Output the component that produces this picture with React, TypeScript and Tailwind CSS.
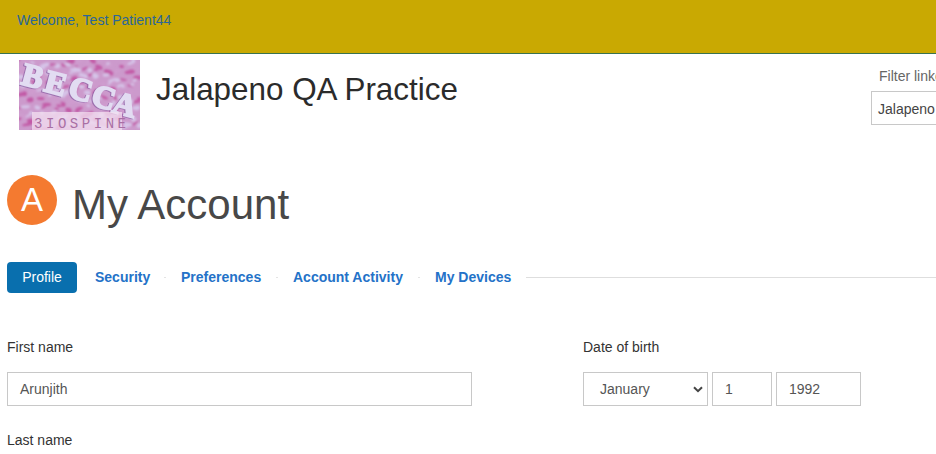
import type { ReactNode } from "react";

const logoSpots = Array.from({ length: 210 }, (_, i) => ({
  x: (i * 47.3 + (i % 7) * 5) % 121,
  y: (i * 29.7 + (i % 5) * 3) % 70,
  rx: 2 + ((i * 13) % 7) * 0.5,
  ry: 1 + ((i * 11) % 5) * 0.35,
  fill: ["#c25aa6", "#d9bce4", "#d6c4e8", "#ac5ca6", "#cf9ccf", "#c968ae"][(i * 5 + (i % 4)) % 6],
  angle: -35 + ((i * 23) % 60),
}));

const logoLetters = [
  { ch: "B", x: 14, y: 16 },
  { ch: "E", x: 37, y: 23 },
  { ch: "C", x: 62, y: 29 },
  { ch: "C", x: 85, y: 37 },
  { ch: "A", x: 106, y: 44 },
];

function Logo() {
  return (
    <svg width="121" height="70" viewBox="0 0 121 70" className="block shrink-0">
      <defs>
        <filter id="soft"><feGaussianBlur stdDeviation="0.8" /></filter>
        <filter id="edge"><feGaussianBlur stdDeviation="0.35" /></filter>
        <clipPath id="frame"><rect width="121" height="70" /></clipPath>
      </defs>
      <g clipPath="url(#frame)">
        <rect width="121" height="70" fill="#cc9acc" />
        <g filter="url(#soft)">
          {logoSpots.map((s, i) => (
            <ellipse key={i} cx={s.x} cy={s.y} rx={s.rx} ry={s.ry} fill={s.fill} transform={`rotate(${s.angle} ${s.x} ${s.y})`} />
          ))}
        </g>
        <g className="font-['Liberation_Serif',serif] font-bold" fontSize="32" textAnchor="middle" filter="url(#edge)">
          {logoLetters.map((l, i) => (
            <g key={i} transform={`translate(${l.x} ${l.y}) rotate(15)`}>
              <text x="-1" y="12" fill="#84599f" stroke="#84599f" strokeWidth="2" opacity="0.65">{l.ch}</text>
              <text y="11" fill="#e2dcf2" stroke="#e2dcf2" strokeWidth="2">{l.ch}</text>
            </g>
          ))}
        </g>
        <rect x="13" y="52" width="90" height="18" fill="#f3dff1" opacity="0.76" />
        <text x="15" y="68" fontSize="14" textLength="92" fill="#a96fa4" className="font-['Liberation_Mono',monospace]">3IOSPINE</text>
      </g>
    </svg>
  );
}

function Tab({ className, children }: { className: string; children: ReactNode }) {
  return <a className={`block bg-white pb-[2px] font-bold text-[#2472c8] whitespace-nowrap ${className}`}>{children}</a>;
}

function Chevron() {
  return (
    <svg width="10" height="7" viewBox="0 0 10 7" className="mr-1" fill="none" stroke="#444" strokeWidth="2">
      <path d="M1 1.2 5 5.2 9 1.2" />
    </svg>
  );
}

const field = "flex h-[34px] items-center border border-[#c8c8c8] bg-white pl-3 text-[#555]";

export default function App() {
  return (
    <div className="h-[454px] w-[936px] overflow-hidden bg-white font-['Liberation_Sans',Arial,sans-serif] text-sm leading-5 text-[#333]">
      <header className="h-[54px] border-b border-[#39734f] bg-[#c9a902] pt-[10px] pl-[17px] text-[#2b6699]">
        Welcome, Test Patient44
      </header>

      <div className="flex h-[121px] pt-[6px] pl-[19px]">
        <Logo />
        <h1 className="ml-4 pt-[12px] text-[31.4px] leading-9 text-[#2b2b2b] whitespace-nowrap">Jalapeno QA Practice</h1>
        <div className="ml-auto w-[65px] shrink-0 overflow-hidden pt-[6px] whitespace-nowrap">
          <div className="pl-2 text-[#666]">Filter linked</div>
          <div className="mt-[5px] flex h-[34px] w-[200px] items-center border border-[#c8c8c8] pt-[2px] pl-[6px] text-[#444]">Jalapeno</div>
        </div>
      </div>

      <div className="flex h-[87px] pl-[7px]">
        <div className="flex size-[50px] items-center justify-center rounded-full bg-[#f47a30] pb-px text-[33px] text-white">A</div>
        <h2 className="ml-[15px] pt-[6px] text-[42px] leading-[48px] text-[#484848]">My Account</h2>
      </div>

      <nav className="flex h-[31px] items-center pl-[7px]">
        <a className="flex h-[31px] w-[70px] items-center justify-center rounded-[4px] bg-[#096fae] pb-[2px] text-white">Profile</a>
        <Tab className="ml-[18px] w-[69px]">Security</Tab>
        <span className="h-px w-[2px] bg-[#e4e4e4]" />
        <Tab className="w-[110px] pl-[15px]">Preferences</Tab>
        <span className="h-px w-[2px] bg-[#e4e4e4]" />
        <Tab className="w-[140px] pl-[15px]">Account Activity</Tab>
        <span className="h-px w-[2px] bg-[#e4e4e4]" />
        <Tab className="w-[106px] pl-[15px]">My Devices</Tab>
        <span className="h-px flex-1 bg-[#dedede]" />
      </nav>

      <main className="flex pt-[44px] pl-[7px]">
        <section className="w-[576px]">
          <label className="block">First name</label>
          <div className={`mt-[15px] w-[465px] ${field}`}>Arunjith</div>
          <label className="mt-[24px] block">Last name</label>
        </section>
        <section>
          <label className="block">Date of birth</label>
          <div className="mt-[15px] flex gap-1">
            <div className={`w-[125px] justify-between ${field}`}><span className="pl-1">January</span><Chevron /></div>
            <div className={`w-[60px] ${field}`}>1</div>
            <div className={`w-[85px] ${field}`}>1992</div>
          </div>
        </section>
      </main>
    </div>
  );
}
